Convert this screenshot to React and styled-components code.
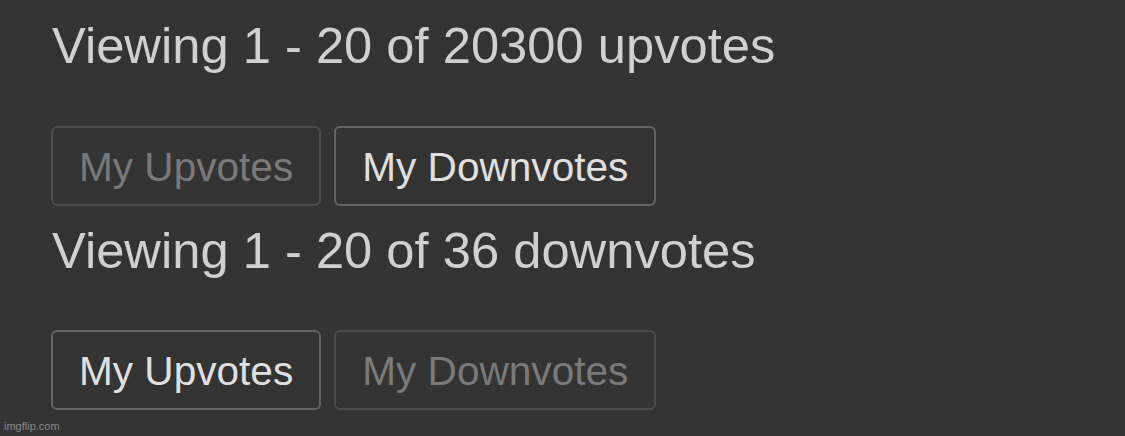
import React, { useState } from "react";
import styled, { createGlobalStyle } from "styled-components";

const GlobalStyle = createGlobalStyle`
  html, body {
    margin: 0;
    padding: 0;
    background: #333333;
  }
  body {
    font-family: "Liberation Sans", Arial, Helvetica, sans-serif;
  }
`;

const sections = [
  { kind: "upvotes", total: 20300 },
  { kind: "downvotes", total: 36 },
];

const App = () => {
  const [tabs] = useState(["upvotes", "downvotes"]);
  return (
    <Page>
      <GlobalStyle />
      {sections.map((section) => (
        <Section key={section.kind}>
          <Heading>
            Viewing 1 - 20 of {section.total} {section.kind}
          </Heading>
          <TabRow>
            {tabs.map((tab) => (
              <TabButton key={tab} active={tab !== section.kind}>
                {tab === "upvotes" ? "My Upvotes" : "My Downvotes"}
              </TabButton>
            ))}
          </TabRow>
        </Section>
      ))}
      <Watermark>imgflip.com</Watermark>
    </Page>
  );
};

export default App;

const Page = styled.div`
  position: relative;
  width: 1125px;
  height: 436px;
  box-sizing: border-box;
  padding: 17px 0 0 51px;
  background: #333333;
  display: flex;
  flex-direction: column;
  gap: 16px;
  overflow: hidden;
`;

const Section = styled.div`
  display: flex;
  flex-direction: column;
  gap: 51px;
`;

const Heading = styled.div`
  font-size: 50.7px;
  line-height: 57.5px;
  color: #d0d0d0;
  padding-left: 1px;
  white-space: nowrap;
`;

const TabRow = styled.div`
  display: flex;
  gap: 13px;
`;

const TabButton = styled.div`
  height: 80px;
  box-sizing: border-box;
  padding: 3px 26px 0;
  display: flex;
  align-items: center;
  border-radius: 6px;
  border: 2px solid ${({ active }) => (active ? "#636363" : "#4b4b4b")};
  color: ${({ active }) => (active ? "#e0e0e0" : "#797979")};
  font-size: 40.6px;
  white-space: nowrap;
`;

const Watermark = styled.div`
  position: absolute;
  left: 4px;
  bottom: 4px;
  font-size: 11px;
  color: #8a8a8a;
`;
